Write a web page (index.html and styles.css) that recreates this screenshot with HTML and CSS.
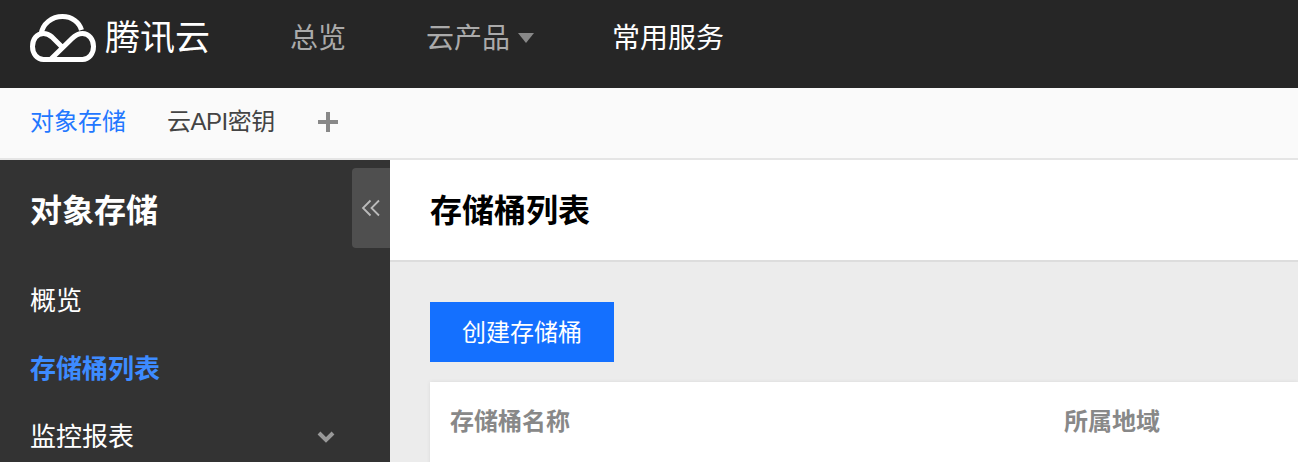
FILE: index.html
```html
<!DOCTYPE html>
<html lang="zh-CN">
<head>
<meta charset="utf-8">
<title>对象存储</title>
<link rel="stylesheet" href="styles.css">
</head>
<body>
<header class="topbar">
  <div class="brand">
    <svg class="logo" viewBox="0 0 66 48" width="66" height="48" aria-hidden="true">
      <path d="M31 32 22 23C19 20.500 16.500 19.500 13.500 19.500 6.500 19.500 2.500 25.500 2.500 32.500 2.500 39.500 7 45.500 13.500 45.500H52.500C59 45.500 63.500 39.500 63.500 32.500 63.500 25.500 59 19.500 52.500 19.500 48 19.500 45 21.500 42 24.500L21 45" fill="none" stroke="#fff" stroke-width="5"/>
      <path d="M11 20.500C12.500 9.500 22 2.500 32.500 2.500 42 2.500 49.500 8.500 51.500 16" fill="none" stroke="#fff" stroke-width="5"/>
    </svg>
    <span class="brand-name">腾讯云</span>
  </div>
  <nav class="mainnav">
    <a class="mainnav-item">总览</a>
    <a class="mainnav-item">云产品<i class="caret"></i></a>
    <a class="mainnav-item is-current">常用服务</a>
  </nav>
</header>
<div class="subbar">
  <a class="subbar-item is-active">对象存储</a>
  <a class="subbar-item is-tight">云API密钥</a>
  <svg class="plus" viewBox="0 0 20 20" width="20" height="20" aria-hidden="true"><path d="M8 0h4v8h8v4h-8v8H8v-8H0V8h8z" fill="#888"/></svg>
</div>
<div class="body">
  <aside class="sidebar">
    <h2 class="sidebar-title">对象存储</h2>
    <button class="collapse" aria-label="收起">
      <svg viewBox="0 0 20 18" width="20" height="18" aria-hidden="true"><path d="M9.500 1.500 2 9l7.500 7.500M18 1.500 10.500 9l7.500 7.500" fill="none" stroke="#bbb" stroke-width="1.800"/></svg>
    </button>
    <ul class="menu">
      <li class="menu-item">概览</li>
      <li class="menu-item is-active">存储桶列表</li>
      <li class="menu-item has-sub">监控报表
        <svg class="chev" viewBox="0 0 18 12" width="18" height="12" aria-hidden="true"><path d="M2 2l7 7 7-7" fill="none" stroke="#999" stroke-width="4"/></svg>
      </li>
    </ul>
  </aside>
  <main class="content">
    <div class="page-head"><h1>存储桶列表</h1></div>
    <div class="page-body">
      <button class="primary">创建存储桶</button>
      <div class="table-card">
        <div class="table-head">
          <span class="col-name">存储桶名称</span>
          <span class="col-region">所属地域</span>
        </div>
      </div>
    </div>
  </main>
</div>
</body>
</html>
```
FILE: styles.css
```css
* { box-sizing: border-box; }
html, body { margin: 0; height: 462px; overflow: hidden; }
body { font-family: "Liberation Sans", "Noto Sans CJK SC", sans-serif; background: #ececec; }
h1, h2, ul { margin: 0; padding: 0; }
.topbar { height: 88px; background: #262626; display: flex; align-items: center; padding: 0 0 12px 30px; }
.brand { display: flex; align-items: center; width: 260px; }
.logo { margin-right: 9px; display: block; }
.brand-name { font-size: 35px; line-height: 48px; color: #fff; font-weight: 400; }
.mainnav { display: flex; gap: 80px; padding-top: 2px; }
.mainnav-item { font-size: 28px; line-height: 40px; color: #aaa; display: flex; align-items: center; }
.mainnav-item.is-current { color: #fff; margin-left: -2px; }
.caret { width: 0; height: 0; margin: 0 0 2px 8px; border-left: 8px solid transparent; border-right: 8px solid transparent; border-top: 10px solid #888; }
.subbar { height: 72px; background: #fafafa; border-bottom: 2px solid #e5e5e5; display: flex; align-items: center; padding: 0 0 2px 30px; }
.subbar-item { font-size: 24px; line-height: 36px; color: #444; margin-right: 41px; }
.subbar-item.is-active { color: #2277ff; }
.subbar-item.is-tight { letter-spacing: -.5px; margin-right: 43px; }
.plus { display: block; }
.body { display: flex; height: 302px; }
.sidebar { width: 390px; background: #333; position: relative; padding: 0 30px; flex: none; }
.sidebar-title { font-size: 32px; line-height: 48px; padding-top: 27px; color: #fff; font-weight: 700; }
.collapse { position: absolute; top: 8px; right: 0; width: 38px; height: 80px; border: 0; padding: 0; background: #4f4f4f; border-radius: 4px 0 0 4px; display: flex; align-items: center; justify-content: center; }
.menu { list-style: none; padding-top: 46px; }
.menu-item { font-size: 26px; line-height: 40px; margin-bottom: 28px; color: #fff; display: flex; justify-content: space-between; align-items: center; }
.menu-item.is-active { color: #3d8bff; font-weight: 700; }
.chev { display: block; margin-right: 25px; }
.content { flex: 1; min-width: 0; }
.page-head { height: 102px; background: #fff; border-bottom: 2px solid #ddd; display: flex; align-items: center; padding: 2px 40px 0; }
.page-head h1 { font-size: 32px; line-height: 48px; color: #000; font-weight: 700; }
.page-body { padding: 40px 0 0 40px; }
.primary { display: block; width: 184px; height: 60px; border: 0; padding: 0 0 4px; background: #1470ff; color: #fff; font: inherit; font-size: 24px; }
.table-card { margin-top: 20px; background: #fff; height: 100px; box-shadow: 0 0 4px rgba(0,0,0,.08); }
.table-head { display: flex; padding: 20px 0 0 20px; font-size: 24px; line-height: 40px; font-weight: 700; color: #888; }
.col-name { width: 614px; }
```
